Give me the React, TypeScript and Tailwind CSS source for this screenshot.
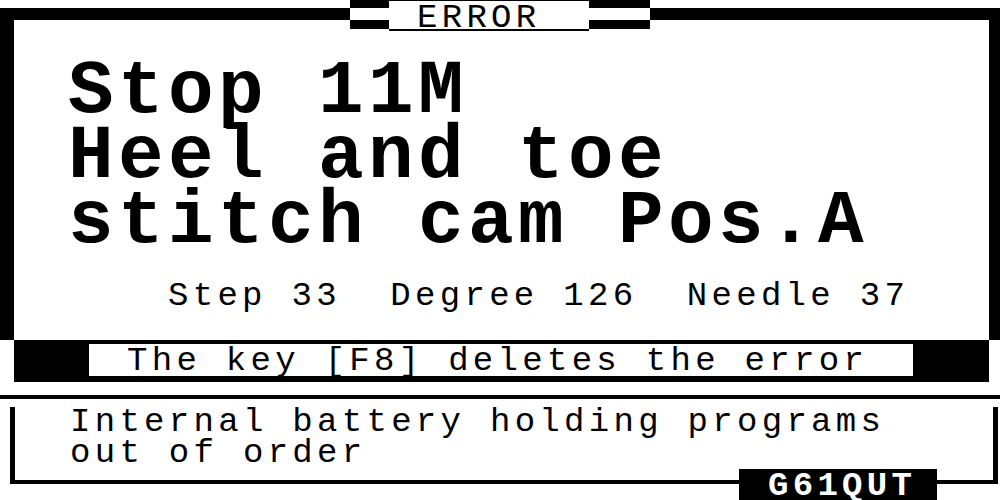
const mono = "font-['Liberation_Mono',monospace]";

function Deco({ width }: { width: string }) {
  // two black stripes either side of the title
  return (
    <div className={`${width} flex h-full flex-col`}>
      <div className="h-[8px] bg-black" />
      <div className="h-[12px]" />
      <div className="h-[9px] bg-black" />
    </div>
  );
}

export default function App() {
  return (
    <div className={`h-[500px] w-[1000px] overflow-hidden bg-white text-black ${mono}`}>
      {/* Error panel */}
      <div className="relative mt-[8px] h-[332px] border-l-[14px] border-r-[11px] border-t-[12px] border-black">
        <div className="absolute -top-[20px] left-[336px] flex h-[31px] bg-white">
          <Deco width="w-[39px]" />
          <div className="h-[31px] w-[200px] border-b-2 border-t border-black pl-[28px] text-[34px] leading-[34px] tracking-[4.3px]">
            ERROR
          </div>
          <Deco width="w-[61px]" />
        </div>

        <div className="pl-[54px] pt-[40px] text-[76px] font-bold leading-[65px] tracking-[4.4px] whitespace-pre">
          <div>Stop 11M</div>
          <div>Heel and toe</div>
          <div>stitch cam Pos.A</div>
        </div>

        <div className="mt-[24px] pl-[154px] text-[34px] leading-[34px] tracking-[4.3px] whitespace-pre">
          Step 33  Degree 126  Needle 37
        </div>
      </div>

      {/* Hint bar */}
      <div className="ml-[14px] h-[42px] w-[975px] bg-black pl-[75px] pt-[4px]">
        <div className="h-[32px] w-[824px] bg-white pl-[38px] text-[34px] leading-[34px] tracking-[4.3px] whitespace-pre">
          The key [F8] deletes the error
        </div>
      </div>

      <div className="mt-[13px] h-[4px] bg-black" />

      {/* Status box */}
      <div className="relative ml-[10px] mt-[8px] h-[77px] w-[988px] border-b-4 border-l-[5px] border-r-[5px] border-black pl-[55px] text-[34px] leading-[31px] tracking-[4.3px] whitespace-pre">
        <div>Internal battery holding programs</div>
        <div>out of order</div>
        <div className="absolute left-[724px] top-[62px] h-[31px] w-[198px] bg-black pl-[29px] pt-[2px] font-bold text-white">
          G61QUT
        </div>
      </div>
    </div>
  );
}
